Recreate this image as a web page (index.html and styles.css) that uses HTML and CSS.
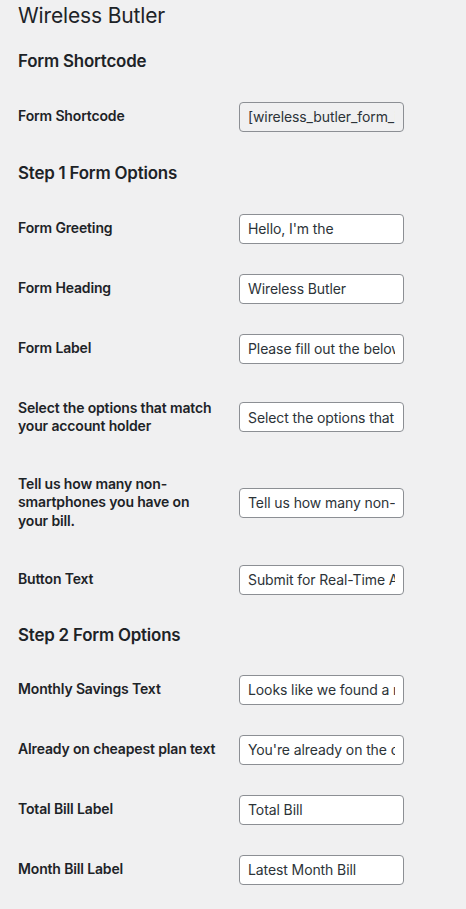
FILE: index.html
```html
<!DOCTYPE html>
<html lang="en">
<head>
<meta charset="utf-8">
<title>Wireless Butler</title>
<link rel="stylesheet" href="styles.css">
</head>
<body>
<div class="wrap">
  <h1 class="page-title">Wireless Butler</h1>

  <h2 class="section-title">Form Shortcode</h2>
  <table class="form-table">
    <tr>
      <th>Form Shortcode</th>
      <td><input class="field field-readonly" type="text" readonly value="[wireless_butler_form_id=1]"></td>
    </tr>
  </table>

  <h2 class="section-title">Step 1 Form Options</h2>
  <table class="form-table">
    <tr>
      <th>Form Greeting</th>
      <td><input class="field" type="text" value="Hello, I'm the"></td>
    </tr>
    <tr>
      <th>Form Heading</th>
      <td><input class="field" type="text" value="Wireless Butler"></td>
    </tr>
    <tr>
      <th>Form Label</th>
      <td><input class="field" type="text" value="Please fill out the below form"></td>
    </tr>
    <tr>
      <th>Select the options that match your account holder</th>
      <td><input class="field" type="text" value="Select the options that match your account holder"></td>
    </tr>
    <tr>
      <th>Tell us how many non-smartphones you have on your bill.</th>
      <td><input class="field" type="text" value="Tell us how many non-smartphones you have on your bill."></td>
    </tr>
    <tr>
      <th>Button Text</th>
      <td><input class="field" type="text" value="Submit for Real-Time Analysis"></td>
    </tr>
  </table>

  <h2 class="section-title section-title-tight">Step 2 Form Options</h2>
  <table class="form-table">
    <tr>
      <th>Monthly Savings Text</th>
      <td><input class="field" type="text" value="Looks like we found a monthly savings of"></td>
    </tr>
    <tr>
      <th>Already on cheapest plan text</th>
      <td><input class="field" type="text" value="You're already on the cheapest plan"></td>
    </tr>
    <tr>
      <th>Total Bill Label</th>
      <td><input class="field" type="text" value="Total Bill"></td>
    </tr>
    <tr>
      <th>Month Bill Label</th>
      <td><input class="field" type="text" value="Latest Month Bill"></td>
    </tr>
  </table>
</div>
</body>
</html>
```

FILE: styles.css
```css
html, body {
  margin: 0;
  padding: 0;
  background: #f0f0f1;
}

body {
  font-family: Inter, "Noto Sans", Roboto, sans-serif;
  font-size: 13px;
  line-height: 18.2px;
  color: #1d2327;
}

.wrap {
  padding: 0 0 0 18px;
}

.page-title {
  font-size: 21px;
  font-weight: 400;
  letter-spacing: -0.15px;
  line-height: 29.9px;
  margin: 0;
  padding: 1px 0 4px;
}

.section-title {
  font-size: 16.9px;
  font-weight: 600;
  letter-spacing: -0.2px;
  line-height: 18.2px;
  margin: 16.9px 0;
}

.section-title-tight {
  margin: 16px 0 15.5px;
}

.form-table {
  border-collapse: collapse;
  border-spacing: 0;
  margin-top: 6.5px;
}

.form-table th {
  width: 200px;
  padding: 20px 10px 20px 0;
  text-align: left;
  vertical-align: top;
  font-size: 14px;
  font-weight: 600;
  letter-spacing: -0.15px;
  line-height: 18.2px;
}

.form-table td {
  padding: 15px 10px 15px 11px;
  vertical-align: middle;
  line-height: 1.3;
}

.field {
  box-sizing: border-box;
  display: block;
  width: 165px;
  height: 30px;
  margin: 0;
  padding: 0 8px;
  font-family: Inter, "Noto Sans", Roboto, sans-serif;
  font-size: 14px;
  letter-spacing: -0.1px;
  color: #2c3338;
  background: #fff;
  border: 1px solid #8c8f94;
  border-radius: 4px;
  outline: none;
}

.field-readonly {
  background: #f0f0f1;
}
```
